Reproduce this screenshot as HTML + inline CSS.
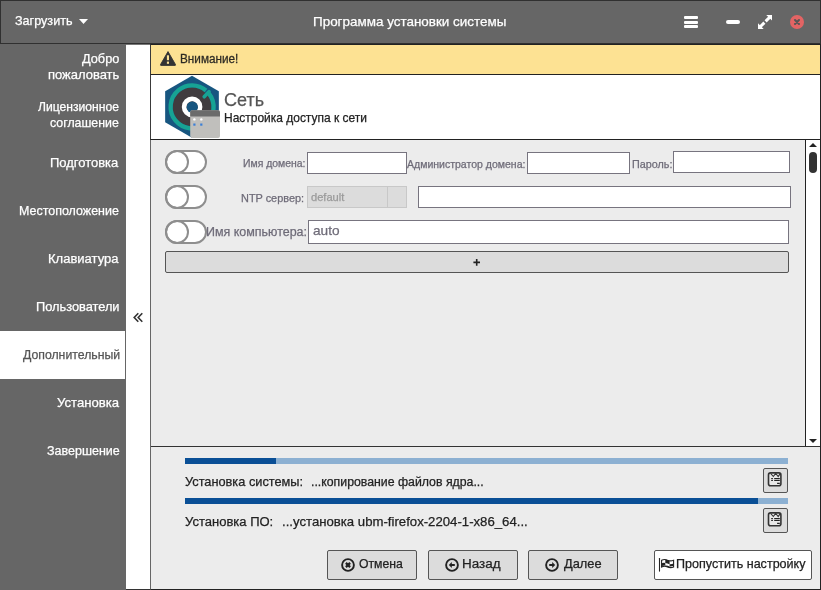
<!DOCTYPE html>
<html><head><meta charset="utf-8">
<style>
*{box-sizing:border-box;margin:0;padding:0}
html,body{width:821px;height:590px;overflow:hidden;background:#ececec}
body{position:relative;font-family:"Liberation Sans",sans-serif;color:#222}
.a{position:absolute}
.tx{position:absolute;white-space:pre;line-height:20px;height:20px;will-change:transform;-webkit-text-stroke:0.25px currentColor}
.t{position:absolute;white-space:pre;line-height:20px;height:20px;will-change:transform}
#tb{left:0;top:0;width:821px;height:44px;background:#666;border:1px solid #303030}
#side{left:0;top:44px;width:126px;height:546px;background:#666}
.si{position:absolute;left:0;width:120px;text-align:right;color:#fff;font-size:12.5px;line-height:15px;white-space:pre;will-change:transform}
#sel{left:0;top:331px;width:125px;height:48px;background:#fff}
#col{left:126px;top:45px;width:25px;height:544px;background:#fff}
#frame{left:150px;top:44px;width:671px;height:546px;border:1px solid #222;border-left-color:#666;background:#ececec}
#warn{left:150px;top:44px;width:670px;height:31px;background:#fde293;border-top:1px solid #222;border-bottom:1px solid #222;border-left:1px solid #3a3a3a}
#hdr{left:150px;top:75px;width:670px;height:65px;background:#fff;border-left:1px solid #3a3a3a;border-bottom:1px solid #222}
.tog{position:absolute;width:42px;height:24px;border:2px solid #8e8e8e;border-radius:12px;background:#fff}
.tog::before{content:"";position:absolute;left:-2px;top:-2px;width:24px;height:24px;border:2px solid #8e8e8e;border-radius:50%;box-sizing:border-box}
.inp{position:absolute;background:#fff;border:1px solid #77747f}
.lbl{position:absolute;white-space:pre;color:#6e6b78;font-size:10.5px;line-height:14px;will-change:transform}
.btn{position:absolute;background:#dcdcdc;border:1px solid #555;border-radius:2px}
.bt{position:absolute;white-space:pre;color:#222;font-size:12.5px;line-height:16px;will-change:transform}
</style></head><body>
<!-- title bar -->
<div id="tb" class="a"></div>
<svg class="a" style="left:79px;top:19px" width="10" height="6"><path d="M0 0H9L4.5 5Z" fill="#fff"/></svg>
<svg class="a" style="left:680px;top:12px" width="22" height="20">
 <rect x="4" y="4" width="14" height="3" rx="1" fill="#fff"/>
 <rect x="4" y="9" width="14" height="3" rx="1" fill="#fff"/>
 <rect x="4" y="13" width="14" height="3" rx="1" fill="#fff"/>
</svg>
<svg class="a" style="left:722px;top:12px" width="22" height="20"><rect x="4" y="8" width="14" height="4" rx="2" fill="#fff"/></svg>
<svg class="a" style="left:754px;top:12px" width="22" height="20">
 <path d="M12.2 2.9H18V8.6Z M4 11.3V17H9.7Z" fill="#fff"/>
 <path d="M16.2 4.8L11.6 9.4M10.4 10.6L5.8 15.2" stroke="#fff" stroke-width="3"/>
</svg>
<svg class="a" style="left:788px;top:13px" width="18" height="18">
 <circle cx="9" cy="9" r="7" fill="#e36464"/>
 <path d="M7 7L11 11M11 7L7 11" stroke="#555" stroke-width="2" stroke-linecap="round"/>
</svg>

<!-- sidebar -->
<div id="side" class="a"></div>
<div id="sel" class="a"></div>

<div id="col" class="a"></div>
<div class="a" style="left:126px;top:44px;width:24px;height:1px;background:#777"></div>
<div class="a" style="left:126px;top:589px;width:24px;height:1px;background:#333"></div>
<svg class="a" style="left:130px;top:310px" width="16" height="16"><path d="M8.3 3.3L4.2 7.5L8.3 11.7M12.3 3.3L8.2 7.5L12.3 11.7" fill="none" stroke="#333" stroke-width="1.6"/></svg>

<!-- frame -->
<div id="frame" class="a"></div>
<div id="warn" class="a"></div>
<svg class="a" style="left:159px;top:50px" width="18" height="17">
 <path d="M9 1.6L16.5 14.6Q16.9 15.4 16 15.4H2Q1.1 15.4 1.5 14.6Z" fill="#333" stroke="#333" stroke-width="0.9" stroke-linejoin="round"/>
 <rect x="7.9" y="5.3" width="2.1" height="4.9" fill="#fde293"/>
 <rect x="7.9" y="11.6" width="2.1" height="2.2" fill="#fde293"/>
</svg>

<div id="hdr" class="a"></div>
<svg class="a" style="left:160px;top:74px" width="65" height="66">
 <path d="M32 1.8L58.85 17.3V48.3L32 63.8L5.15 48.3V17.3Z" fill="#175680"/>
 <circle cx="32.1" cy="32.9" r="19.4" fill="#403c3f"/>
 <circle cx="32.1" cy="32.9" r="21.5" fill="none" stroke="#17a394" stroke-width="4.3" stroke-dasharray="130.1 5" transform="rotate(-39 32.1 32.9)"/>
 <path d="M49 17.6L44.2 22.8" stroke="#17a394" stroke-width="3.6" stroke-linecap="round"/>
 <circle cx="32.1" cy="32.9" r="7.95" fill="none" stroke="#fff" stroke-width="4.7"/>
 <circle cx="32.3" cy="33.2" r="5.6" fill="#175680"/>
 <rect x="30.2" y="36.3" width="29.8" height="27.7" rx="2" fill="#c0bfbc"/>
 <path d="M32.2 36.3H58Q60 36.3 60 38.3V42.6H30.2V38.3Q30.2 36.3 32.2 36.3Z" fill="#6b6b6b"/>
 <circle cx="34.4" cy="45.4" r="1.2" fill="#fff"/>
 <circle cx="41.3" cy="45.4" r="1.2" fill="#fff"/>
 <rect x="33.3" y="49.5" width="2.2" height="2.2" fill="#3a7fd8"/>
 <rect x="40.2" y="49.5" width="2.2" height="2.2" fill="#3a7fd8"/>
</svg>

<!-- content -->
<div class="a" style="left:805px;top:140px;width:15px;height:306px;background:#fff;border-left:1px solid #222"></div>
<svg class="a" style="left:806px;top:140px" width="14" height="306">
 <path d="M3 7H11L7 3Z" fill="#222"/>
 <rect x="3" y="12" width="8" height="21" rx="4" fill="#333"/>
 <path d="M3 299H11L7 303Z" fill="#222"/>
</svg>

<div class="tog" style="left:165px;top:150px"></div>
<div class="inp" style="left:307px;top:152px;width:100px;height:22px"></div>
<div class="inp" style="left:527px;top:152px;width:103px;height:22px"></div>
<div class="inp" style="left:673px;top:151px;width:117px;height:22px"></div>

<div class="tog" style="left:165px;top:185px"></div>
<div class="a" style="left:307px;top:186px;width:100px;height:22px;background:#dcdcdc;border:1px solid #c8c8c8"></div>
<div class="a" style="left:387px;top:187px;width:1px;height:20px;background:#c8c8c8"></div>
<div class="inp" style="left:418px;top:186px;width:373px;height:22px"></div>

<div class="tog" style="left:165px;top:220px"></div>
<div class="inp" style="left:308px;top:220px;width:481px;height:24px"></div>

<div class="btn" style="left:165px;top:251px;width:624px;height:22px"></div>
<svg class="a" style="left:470px;top:256px" width="14" height="14"><path d="M3.4 6.4H10M6.7 3V9.8" stroke="#222" stroke-width="1.6"/></svg>

<!-- bottom -->
<div class="a" style="left:151px;top:446px;width:669px;height:1px;background:#333"></div>
<div class="a" style="left:185px;top:458px;width:603px;height:6px;background:#8cb0d2"></div>
<div class="a" style="left:185px;top:458px;width:91px;height:6px;background:#0a4f96"></div>
<div class="btn" style="left:763px;top:468px;width:25px;height:25px"></div>
<svg class="a" style="left:767px;top:471px" width="16" height="16">
 <rect x="1.5" y="1.9" width="12.4" height="12.8" rx="2" fill="#e8e8e8" stroke="#333" stroke-width="1.6"/>
 <path d="M3.6 2.4L6.3 5.5L8.7 2.4L11.2 5.5L13.4 2.4" fill="none" stroke="#333" stroke-width="1.1"/>
 <path d="M4.2 7.6H5.9M7.2 7.6H12.8M4.2 9.5H5.9M7.2 9.5H12.8M10.1 12.4H12.8" stroke="#222" stroke-width="1.2"/>
</svg>

<div class="a" style="left:185px;top:498px;width:603px;height:6px;background:#8cb0d2"></div>
<div class="a" style="left:185px;top:498px;width:573px;height:6px;background:#0a4f96"></div>
<div class="btn" style="left:763px;top:508px;width:25px;height:25px"></div>
<svg class="a" style="left:767px;top:511px" width="16" height="16">
 <rect x="1.5" y="1.9" width="12.4" height="12.8" rx="2" fill="#e8e8e8" stroke="#333" stroke-width="1.6"/>
 <path d="M3.6 2.4L6.3 5.5L8.7 2.4L11.2 5.5L13.4 2.4" fill="none" stroke="#333" stroke-width="1.1"/>
 <path d="M4.2 7.6H5.9M7.2 7.6H12.8M4.2 9.5H5.9M7.2 9.5H12.8M10.1 12.4H12.8" stroke="#222" stroke-width="1.2"/>
</svg>

<div class="btn" style="left:327px;top:550px;width:90px;height:30px"></div>
<div class="btn" style="left:428px;top:550px;width:90px;height:30px"></div>
<div class="btn" style="left:528px;top:550px;width:90px;height:30px"></div>
<div class="btn" style="left:654px;top:550px;width:158px;height:30px;background:#fff"></div>


<svg class="a" style="left:340px;top:557px" width="16" height="16">
 <circle cx="8" cy="8" r="5.9" fill="none" stroke="#222" stroke-width="1.9"/>
 <path d="M5.9 5.9L10.1 10.1M10.1 5.9L5.9 10.1" stroke="#222" stroke-width="2.2"/>
 <rect x="6.5" y="6.5" width="3" height="3" fill="#222"/>
</svg>
<svg class="a" style="left:444px;top:557px" width="16" height="16">
 <circle cx="8" cy="8" r="5.9" fill="none" stroke="#222" stroke-width="1.9"/>
 <path d="M4.8 8L7.8 5.1V10.9Z" fill="#222"/>
 <path d="M7 8H10.8" stroke="#222" stroke-width="2"/>
</svg>
<svg class="a" style="left:544px;top:557px" width="16" height="16">
 <circle cx="8" cy="8" r="5.9" fill="none" stroke="#222" stroke-width="1.9"/>
 <path d="M11.2 8L8.2 5.1V10.9Z" fill="#222"/>
 <path d="M5.2 8H9" stroke="#222" stroke-width="2"/>
</svg>
<svg class="a" style="left:656px;top:556px" width="20" height="18">
 <path d="M3.5 2.6V15.6" stroke="#222" stroke-width="1.1"/>
 <path d="M2.9 2.6H4.1" stroke="#222" stroke-width="1"/>
 <path d="M5.6 4.3Q8.5 2.8 11.5 4.2Q14.5 5.5 17.6 4.3V11Q14.5 12.2 11.5 10.9Q8.5 9.5 5.6 11Z" fill="#fff"/>
 <path d="M9.3 3.4Q11.5 3.6 13.6 4.9V8.2Q11.5 7.4 9.3 7Z M5.6 7.2Q7.5 6.6 9.3 7V9.4Q7.5 9.4 5.6 10Z M13.6 8.2Q15.6 8.4 17.6 7.6V10Q15.6 10.5 13.6 10.4Z M9.3 9.4Q11.5 9.3 13.6 10.4V11.7Q11.5 11.3 9.3 10.3Z" fill="#222"/>
 <path d="M5.6 4.3Q8.5 2.8 11.5 4.2Q14.5 5.5 17.6 4.3V11Q14.5 12.2 11.5 10.9Q8.5 9.5 5.6 11Z" fill="none" stroke="#222" stroke-width="1.1"/>
</svg>
<div class="tx" style="left:15.42px;top:11.23px;font-size:12.600px;color:#fff;">Загрузить</div>
<div class="tx" style="left:313.42px;top:11.74px;font-size:13.448px;color:#fff;">Программа установки системы</div>
<div class="tx" style="left:82.07px;top:48.58px;font-size:12.743px;color:#fff;">Добро</div>
<div class="tx" style="left:47.99px;top:64.50px;font-size:12.987px;color:#fff;">пожаловать</div>
<div class="tx" style="left:38.28px;top:97.30px;font-size:12.130px;color:#fff;">Лицензионное</div>
<div class="tx" style="left:50.11px;top:112.53px;font-size:12.332px;color:#fff;">соглашение</div>
<div class="tx" style="left:49.96px;top:153.30px;font-size:12.973px;color:#fff;">Подготовка</div>
<div class="tx" style="left:18.70px;top:200.97px;font-size:12.484px;color:#fff;">Местоположение</div>
<div class="tx" style="left:47.56px;top:248.88px;font-size:13.034px;color:#fff;">Клавиатура</div>
<div class="tx" style="left:36.48px;top:296.86px;font-size:12.806px;color:#fff;">Пользователи</div>
<div class="tx" style="left:22.88px;top:345.25px;font-size:12.270px;color:#555;">Дополнительный</div>
<div class="tx" style="left:56.61px;top:392.64px;font-size:13.149px;color:#fff;">Установка</div>
<div class="tx" style="left:46.52px;top:440.97px;font-size:12.504px;color:#fff;">Завершение</div>
<div class="tx" style="left:179.86px;top:49.13px;font-size:11.750px;color:#2c2a24;transform-origin:0 14.07px;transform:scaleY(1.15)">Внимание!</div>
<div class="tx" style="left:224.00px;top:89.75px;font-size:18.028px;color:#555;">Сеть</div>
<div class="tx" style="left:223.94px;top:107.85px;font-size:11.985px;color:#222;">Настройка доступа к сети</div>
<div class="tx" style="left:242.87px;top:154.29px;font-size:10.412px;color:#6e6b78;">Имя домена:</div>
<div class="tx" style="left:407.30px;top:154.25px;font-size:10.537px;color:#6e6b78;">Администратор домена:</div>
<div class="tx" style="left:631.84px;top:154.15px;font-size:10.810px;color:#6e6b78;">Пароль:</div>
<div class="tx" style="left:240.83px;top:188.11px;font-size:10.927px;color:#6e6b78;">NTP сервер:</div>
<div class="tx" style="left:311.16px;top:187.35px;font-size:11.115px;color:#9a9a9a;">default</div>
<div class="tx" style="left:205.80px;top:222.17px;font-size:12.484px;color:#6e6b78;">Имя компьютера:</div>
<div class="tx" style="left:312.95px;top:221.47px;font-size:13.636px;color:#6e6b78;">auto</div>
<div class="tx" style="left:184.62px;top:471.87px;font-size:12.771px;color:#222;">Установка системы:</div>
<div class="tx" style="left:310.79px;top:472.04px;font-size:12.302px;color:#222;">...копирование файлов ядра...</div>
<div class="tx" style="left:184.61px;top:511.78px;font-size:13.033px;color:#222;">Установка ПО:</div>
<div class="tx" style="left:282.31px;top:511.73px;font-size:13.184px;color:#222;">...установка ubm-firefox-2204-1-x86_64...</div>
<div class="tx" style="left:359.09px;top:554.36px;font-size:12.232px;color:#222;">Отмена</div>
<div class="tx" style="left:462.12px;top:553.93px;font-size:13.466px;color:#222;">Назад</div>
<div class="tx" style="left:563.77px;top:554.15px;font-size:12.847px;color:#222;">Далее</div>
<div class="tx" style="left:676.29px;top:554.45px;font-size:12.568px;color:#222;">Пропустить настройку</div>
</body></html>
